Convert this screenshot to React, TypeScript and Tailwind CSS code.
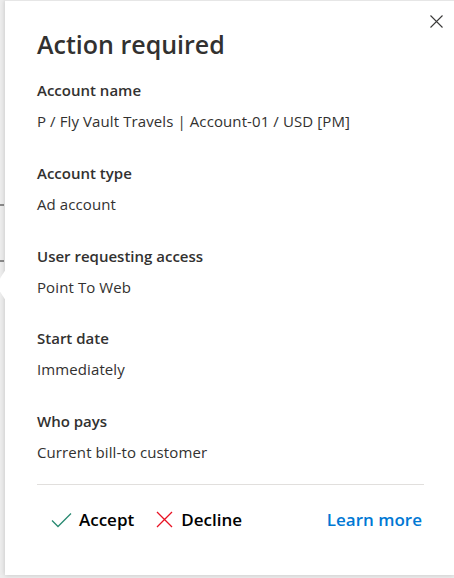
type Field = {
  label: string;
  value: string;
};

const fields: Field[] = [
  { label: "Account name", value: "P / Fly Vault Travels | Account-01 / USD [PM]" },
  { label: "Account type", value: "Ad account" },
  { label: "User requesting access", value: "Point To Web" },
  { label: "Start date", value: "Immediately" },
  { label: "Who pays", value: "Current bill-to customer" },
];

function CheckIcon() {
  return (
    <svg width="21" height="16" viewBox="0 0 21 16" fill="none">
      <path d="M1 8.5 L7 14.5 L20 1.5" stroke="#2a8a72" strokeWidth="1.3" />
    </svg>
  );
}

function CrossIcon() {
  return (
    <svg width="17" height="17" viewBox="0 0 17 17" fill="none">
      <path d="M1 1 L16 16 M16 1 L1 16" stroke="#e81123" strokeWidth="1.3" />
    </svg>
  );
}

function CloseIcon() {
  return (
    <svg width="13" height="13" viewBox="0 0 13 13" fill="none">
      <path d="M0.5 0.5 L12.5 12.5 M12.5 0.5 L0.5 12.5" stroke="#3b3a39" strokeWidth="1.1" />
    </svg>
  );
}

export default function App() {
  return (
    <div
      className="relative h-[578px] w-[454px] overflow-hidden bg-[#ededed]"
      style={{ fontFamily: '"Open Sans", "Noto Sans", sans-serif' }}
    >
      {/* background bits peeking out left of the callout */}
      <div className="absolute left-0 top-[204px] h-[2px] w-[4px] bg-[#8a8a8a]" />
      <div className="absolute left-0 top-[260px] h-[2px] w-[4px] bg-[#8a8a8a]" />

      <div className="relative ml-[5px] h-[575px] border-t border-[#e6e6e6] bg-white shadow-[0_0_5px_rgba(0,0,0,0.18)]">
        {/* beak */}
        <div className="absolute left-[-9px] top-[268px] h-0 w-0 border-y-[16px] border-r-[10px] border-y-transparent border-r-white" />

        <button className="absolute right-[11px] top-[14px]">
          <CloseIcon />
        </button>

        <div className="flex h-full flex-col pl-[32px] pr-[30px]">
          <h1 className="mt-[26px] text-[25px] font-semibold leading-[34px] text-[#323130]">
            Action required
          </h1>

          <div className="mt-[19px] flex flex-col gap-[30.75px]">
            {fields.map((f) => (
              <div key={f.label} className="flex flex-col gap-[10px]">
                <p className="text-[15px] font-semibold leading-[21px] text-[#323130]">{f.label}</p>
                <p className="text-[15px] tracking-[0.1px] leading-[21px] text-[#323130]">{f.value}</p>
              </div>
            ))}
          </div>

          <div className="mt-[21px] border-t border-[#e1dfdd]" />

          <div className="mt-[22px] flex items-center pr-[2px]">
            <button className="ml-[14px] flex items-center gap-[7px] text-[17px] font-semibold text-black">
              <CheckIcon />
              Accept
            </button>
            <button className="ml-[22px] flex items-center gap-[8px] text-[17px] font-semibold text-black">
              <CrossIcon />
              Decline
            </button>
            <a className="ml-auto text-[17px] font-semibold text-[#0078d4]">Learn more</a>
          </div>
        </div>
      </div>
    </div>
  );
}
